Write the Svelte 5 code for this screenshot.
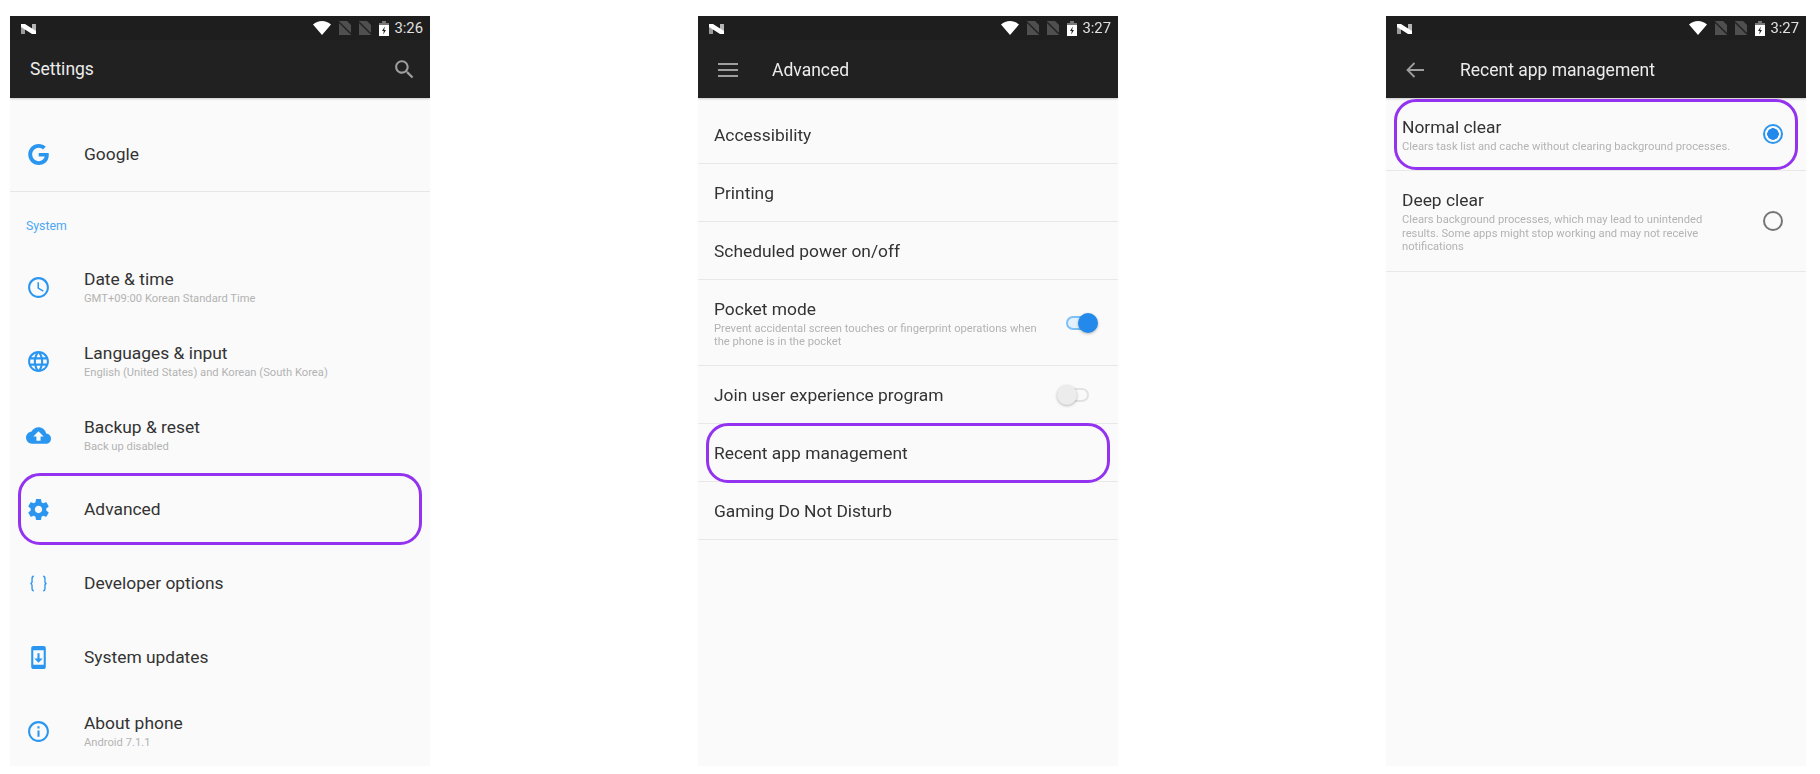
<script>
  const icons = {
    clock: "M11.99 2C6.47 2 2 6.48 2 12s4.47 10 9.99 10C17.52 22 22 17.52 22 12S17.52 2 11.99 2zM12 20c-4.42 0-8-3.58-8-8s3.58-8 8-8 8 3.58 8 8-3.58 8-8 8zM12.5 7H11v6l5.25 3.15.75-1.23-4.5-2.67z",
    globe: "M11.99 2C6.47 2 2 6.48 2 12s4.47 10 9.99 10C17.52 22 22 17.52 22 12S17.52 2 11.99 2zm6.93 6h-2.95c-.32-1.25-.78-2.45-1.38-3.56 1.84.63 3.37 1.91 4.33 3.56zM12 4.04c.83 1.2 1.48 2.53 1.91 3.96h-3.82c.43-1.43 1.08-2.76 1.91-3.96zM4.26 14C4.1 13.36 4 12.69 4 12s.1-1.36.26-2h3.38c-.08.66-.14 1.32-.14 2 0 .68.06 1.34.14 2H4.26zm.82 2h2.95c.32 1.25.78 2.45 1.38 3.56-1.84-.63-3.37-1.9-4.33-3.56zm2.95-8H5.08c.96-1.66 2.49-2.93 4.33-3.56C8.81 5.55 8.35 6.75 8.03 8zM12 19.96c-.83-1.2-1.48-2.53-1.91-3.96h3.82c-.43 1.43-1.08 2.76-1.91 3.96zM14.34 14H9.66c-.09-.66-.16-1.32-.16-2 0-.68.07-1.35.16-2h4.68c.09.65.16 1.32.16 2 0 .68-.07 1.34-.16 2zm.25 5.56c.6-1.11 1.06-2.31 1.38-3.56h2.95c-.96 1.65-2.49 2.93-4.33 3.56zM16.36 14c.08-.66.14-1.32.14-2 0-.68-.06-1.34-.14-2h3.38c.16.64.26 1.31.26 2s-.1 1.36-.26 2h-3.38z",
    cloud: "M19.35 10.04C18.67 6.59 15.64 4 12 4 9.11 4 6.6 5.64 5.35 8.04 2.34 8.36 0 10.91 0 14c0 3.31 2.69 6 6 6h13c2.76 0 5-2.24 5-5 0-2.64-2.05-4.78-4.65-4.96zM14 13v4h-4v-4H7l5-5 5 5h-3z",
    gear: "M19.43 12.98c.04-.32.07-.64.07-.98s-.03-.66-.07-.98l2.11-1.65c.19-.15.24-.42.12-.64l-2-3.46c-.12-.22-.39-.3-.61-.22l-2.49 1c-.52-.4-1.08-.73-1.69-.98l-.38-2.65C14.46 2.18 14.25 2 14 2h-4c-.25 0-.46.18-.49.42l-.38 2.65c-.61.25-1.17.59-1.69.98l-2.49-1c-.23-.09-.49 0-.61.22l-2 3.46c-.13.22-.07.49.12.64l2.11 1.65c-.04.32-.07.65-.07.98s.03.66.07.98l-2.11 1.65c-.19.15-.24.42-.12.64l2 3.46c.12.22.39.3.61.22l2.49-1c.52.4 1.08.73 1.69.98l.38 2.65c.03.24.24.42.49.42h4c.25 0 .46-.18.49-.42l.38-2.65c.61-.25 1.17-.59 1.69-.98l2.49 1c.23.09.49 0 .61-.22l2-3.46c.12-.22.07-.49-.12-.64l-2.11-1.65zM12 15.5c-1.93 0-3.5-1.57-3.5-3.5s1.57-3.5 3.5-3.5 3.5 1.57 3.5 3.5-1.57 3.5-3.5 3.5z",
    phone: "M17 1.01L7 1c-1.1 0-2 .9-2 2v18c0 1.1.9 2 2 2h10c1.1 0 2-.9 2-2V3c0-1.1-.9-1.99-2-1.99zM17 19H7V5h10v14zm-1-6h-3V8h-2v5H8l4 4 4-4z",
    info: "M11 17h2v-6h-2v6zm1-15C6.48 2 2 6.48 2 12s4.48 10 10 10 10-4.48 10-10S17.52 2 12 2zm0 18c-4.41 0-8-3.59-8-8s3.59-8 8-8 8 3.59 8 8-3.59 8-8 8zM11 9h2V7h-2v2z",
  };

  const system = [
    { title: "Date & time", sub: "GMT+09:00 Korean Standard Time", icon: "clock" },
    { title: "Languages & input", sub: "English (United States) and Korean (South Korea)", icon: "globe" },
    { title: "Backup & reset", sub: "Back up disabled", icon: "cloud" },
    { title: "Advanced", icon: "gear", marked: true },
    { title: "Developer options", icon: "braces" },
    { title: "System updates", icon: "phone" },
    { title: "About phone", sub: "Android 7.1.1", icon: "info" },
  ];

  const advanced = [
    { title: "Accessibility" },
    { title: "Printing" },
    { title: "Scheduled power on/off" },
    { title: "Pocket mode", sub: "Prevent accidental screen touches or fingerprint operations when the phone is in the pocket", toggle: "on" },
    { title: "Join user experience program", toggle: "off" },
    { title: "Recent app management", marked: true },
    { title: "Gaming Do Not Disturb" },
  ];

  const modes = [
    { title: "Normal clear", sub: "Clears task list and cache without clearing background processes.", checked: true, marked: true },
    { title: "Deep clear", sub: "Clears background processes, which may lead to unintended results. Some apps might stop working and may not receive notifications" },
  ];
</script>

{#snippet statusbar(time)}
  <div class="status">
    <svg class="n-logo" viewBox="0 0 15 12" width="15" height="12">
      <rect x="0" y="1" width="4" height="10" fill="#9a9a9a" />
      <rect x="11" y="1" width="4" height="10" fill="#b5b5b5" />
      <path d="M0 1h4l11 7v3h-4L0 4z" fill="#fff" />
    </svg>
    <span class="spacer"></span>
    <svg viewBox="0 0 18 14" width="18" height="14">
      <path d="M0 3.5C2.5 1.3 5.6 0 9 0s6.500 1.300 9 3.500L9 14z" fill="#fff" />
    </svg>
    <svg class="sim" viewBox="0 0 12 14" width="12" height="14">
      <path d="M0 0h8l4 4v10H0z" fill="#4f4f4f" />
      <path d="M0 1l12 12" stroke="#212121" stroke-width="1.300" />
    </svg>
    <svg class="sim" viewBox="0 0 12 14" width="12" height="14">
      <path d="M0 0h8l4 4v10H0z" fill="#4f4f4f" />
      <path d="M0 1l12 12" stroke="#212121" stroke-width="1.300" />
    </svg>
    <svg class="batt" viewBox="0 0 10 15" width="10" height="15">
      <path d="M3 0h4v2h3v2H0V2h3z" fill="#777" />
      <path d="M0 4h10v11H0z" fill="#fff" />
      <path d="M5.800 5.500L3 10h1.800l-.6 3.500L7 9H5.200z" fill="#212121" />
    </svg>
    <span class="time">{time}</span>
  </div>
{/snippet}

{#snippet mark()}
  <span class="mark"></span>
{/snippet}

<div class="page">
  <section class="phone">
    <header>
      {@render statusbar("3:26")}
      <div class="toolbar first">
        <h1>Settings</h1>
        <svg class="search" viewBox="0 0 24 24" width="25" height="25">
          <path fill="#9e9e9e" d="M15.500 14h-.79l-.28-.27C15.410 12.590 16 11.110 16 9.500 16 5.910 13.090 3 9.500 3S3 5.910 3 9.500 5.910 16 9.500 16c1.610 0 3.090-.59 4.230-1.570l.27.28v.79l5 4.990L20.490 19l-4.990-5zm-6 0C7.010 14 5 11.990 5 9.500S7.010 5 9.500 5 14 7.010 14 9.500 11.990 14 9.500 14z" />
        </svg>
      </div>
    </header>
    <div class="body">
      <div class="row icon-row google">
        <div class="ico">
          <svg viewBox="0 0 24 24" width="21" height="21">
            <path fill="#2b96f0" d="M12.240 10.285V14.400h6.806c-.275 1.765-2.056 5.174-6.806 5.174-4.095 0-7.439-3.389-7.439-7.574s3.345-7.574 7.439-7.574c2.330 0 3.891.989 4.785 1.849l3.254-3.138C18.189 1.186 15.479 0 12.240 0c-6.635 0-12 5.365-12 12s5.365 12 12 12c6.926 0 11.520-4.869 11.520-11.726 0-.788-.085-1.390-.189-1.989H12.240z" />
          </svg>
        </div>
        <div class="text"><div class="title">Google</div></div>
      </div>
      <div class="section">System</div>
      {#each system as item}
        <div class="row icon-row">
          <div class="ico">
            {#if item.icon === "braces"}
              <svg viewBox="0 0 24 24" width="25" height="25" fill="none" stroke="#2b96f0" stroke-width="1.300">
                <path d="M7.500 5C5.800 5 5.800 6 5.800 7.500v2.500c0 1.200-.8 2-1.600 2 .8 0 1.600.8 1.600 2v2.500c0 1.500 0 2.500 1.700 2.500" />
                <path d="M16.500 5c1.700 0 1.700 1 1.700 2.500v2.500c0 1.200.8 2 1.600 2-.8 0-1.600.8-1.600 2v2.500c0 1.500 0 2.500-1.700 2.500" />
              </svg>
            {:else}
              <svg viewBox="0 0 24 24" width="25" height="25">
                <path fill="#2b96f0" d={icons[item.icon]} />
              </svg>
            {/if}
          </div>
          <div class="text">
            <div class="title">{item.title}</div>
            {#if item.sub}<div class="sub">{item.sub}</div>{/if}
          </div>
          {#if item.marked}{@render mark()}{/if}
        </div>
      {/each}
    </div>
  </section>

  <section class="phone">
    <header>
      {@render statusbar("3:27")}
      <div class="toolbar">
        <svg class="nav" viewBox="0 0 20 14" width="20" height="14" fill="#9e9e9e">
          <rect y="0" width="20" height="2" />
          <rect y="6" width="20" height="2" />
          <rect y="12" width="20" height="2" />
        </svg>
        <h1>Advanced</h1>
      </div>
    </header>
    <div class="body list">
      {#each advanced as item}
        <div class="row plain" class:tall={item.sub}>
          <div class="text">
            <div class="title">{item.title}</div>
            {#if item.sub}<div class="sub">{item.sub}</div>{/if}
          </div>
          {#if item.toggle}
            <div class="switch {item.toggle}"><span class="thumb"></span></div>
          {/if}
          {#if item.marked}{@render mark()}{/if}
        </div>
      {/each}
    </div>
  </section>

  <section class="phone">
    <header>
      {@render statusbar("3:27")}
      <div class="toolbar">
        <svg class="nav back" viewBox="0 0 18 16" width="18" height="16" fill="none" stroke="#9e9e9e" stroke-width="1.800">
          <path d="M18 8H1.500M8.500 1L1.500 8l7 7" />
        </svg>
        <h1>Recent app management</h1>
      </div>
    </header>
    <div class="body">
      {#each modes as item}
        <div class="row option">
          <div class="text">
            <div class="title">{item.title}</div>
            <div class="sub">{item.sub}</div>
          </div>
          <span class="radio" class:checked={item.checked}></span>
          {#if item.marked}{@render mark()}{/if}
        </div>
      {/each}
    </div>
  </section>
</div>

<style>
  :global(body) {
    margin: 0;
    background: #fff;
  }

  .page {
    display: flex;
    gap: 268px;
    height: 774px;
    padding: 16px 0 8px 10px;
    box-sizing: border-box;
    font-family: Roboto, "Liberation Sans", sans-serif;
    overflow: hidden;
    filter: blur(0.35px);
  }

  .phone {
    width: 420px;
    flex: none;
    display: flex;
    flex-direction: column;
    background: #fafafa;
    overflow: hidden;
  }

  header {
    height: 82px;
    flex: none;
    background: #212121;
    box-shadow: 0 1px 2px rgba(0, 0, 0, 0.2);
    position: relative;
  }

  .status {
    height: 24px;
    display: flex;
    align-items: center;
    padding: 0 7px 0 11px;
    background: #1e1e1e;
  }

  .spacer {
    flex: 1;
  }

  .n-logo {
    margin-top: 1px;
  }

  .sim {
    margin-left: 8px;
  }

  .batt {
    margin-left: 8px;
  }

  .time {
    margin-left: 5px;
    font-size: 14.800px;
    color: #e0e0e0;
  }

  .toolbar {
    height: 58px;
    display: flex;
    align-items: center;
    padding: 2px 20px 0;
    box-sizing: border-box;
  }

  .toolbar.first {
    justify-content: space-between;
    padding: 0 13px 0 20px;
  }

  h1 {
    margin: 0;
    font-size: 17.500px;
    font-weight: 400;
    color: #ececec;
  }

  .nav {
    margin-right: 34px;
  }

  .nav.back {
    margin-right: 36px;
  }

  .search {
    display: block;
  }

  .body {
    flex: 1;
    min-height: 0;
  }

  .list {
    padding-top: 8px;
  }

  .row {
    position: relative;
    display: flex;
    align-items: center;
    box-sizing: border-box;
  }

  .icon-row {
    height: 74px;
  }

  .icon-row .text {
    padding-top: 1px;
  }

  .plain .text {
    padding-top: 2px;
  }

  .google {
    margin-top: 19px;
    height: 75px;
    border-bottom: 1px solid #e6e6e6;
  }

  .ico {
    width: 74px;
    flex: none;
    display: flex;
    justify-content: center;
    padding-right: 18px;
    box-sizing: border-box;
  }

  .section {
    height: 58px;
    box-sizing: border-box;
    padding: 26px 0 0 16px;
    font-size: 12.300px;
    line-height: 17px;
    color: #4aa8f5;
  }

  .title {
    font-size: 17.400px;
    line-height: 21px;
    color: #333;
  }

  .sub {
    font-size: 11.200px;
    line-height: 13.400px;
    color: #b3b3b3;
    margin-top: 2px;
  }

  .plain {
    height: 58px;
    padding: 0 29px 0 16px;
    border-bottom: 1px solid #e8e8e8;
    justify-content: space-between;
  }

  .plain.tall {
    height: 86px;
  }

  .plain .sub {
    max-width: 340px;
  }

  .switch {
    position: relative;
    width: 23px;
    height: 14px;
    box-sizing: border-box;
    border-radius: 7px;
  }

  .switch.on {
    border: 2px solid #7cc0f7;
    background: #e3f1fc;
  }

  .switch.off {
    border: 2px solid #e2e2e2;
    background: #fafafa;
  }

  .thumb {
    position: absolute;
    top: 50%;
    width: 20px;
    height: 20px;
    margin-top: -10px;
    border-radius: 50%;
    box-shadow: 0 1px 3px rgba(0, 0, 0, 0.28);
  }

  .on .thumb {
    right: -11px;
    background: #2389ea;
  }

  .off .thumb {
    left: -11px;
    background: #ececec;
  }

  .option {
    padding: 19px 23px 17px 16px;
    border-bottom: 1px solid #e8e8e8;
    justify-content: space-between;
  }

  .option .sub {
    max-width: 335px;
  }

  .radio {
    width: 20px;
    height: 20px;
    flex: none;
    margin-top: -2px;
    box-sizing: border-box;
    border-radius: 50%;
    border: 2px solid #757575;
  }

  .radio.checked {
    border-color: #2b96f0;
    background: radial-gradient(circle, #2389ea 0 5.500px, transparent 6px);
  }

  .mark {
    position: absolute;
    inset: 1px 8px 1px 8px;
    border: 3.500px solid #9333f0;
    border-radius: 22px;
    pointer-events: none;
  }

  .plain .mark {
    inset: -1px 8px -2px 8px;
  }

  .option .mark {
    inset: 1px 8px 0 8px;
  }
</style>
